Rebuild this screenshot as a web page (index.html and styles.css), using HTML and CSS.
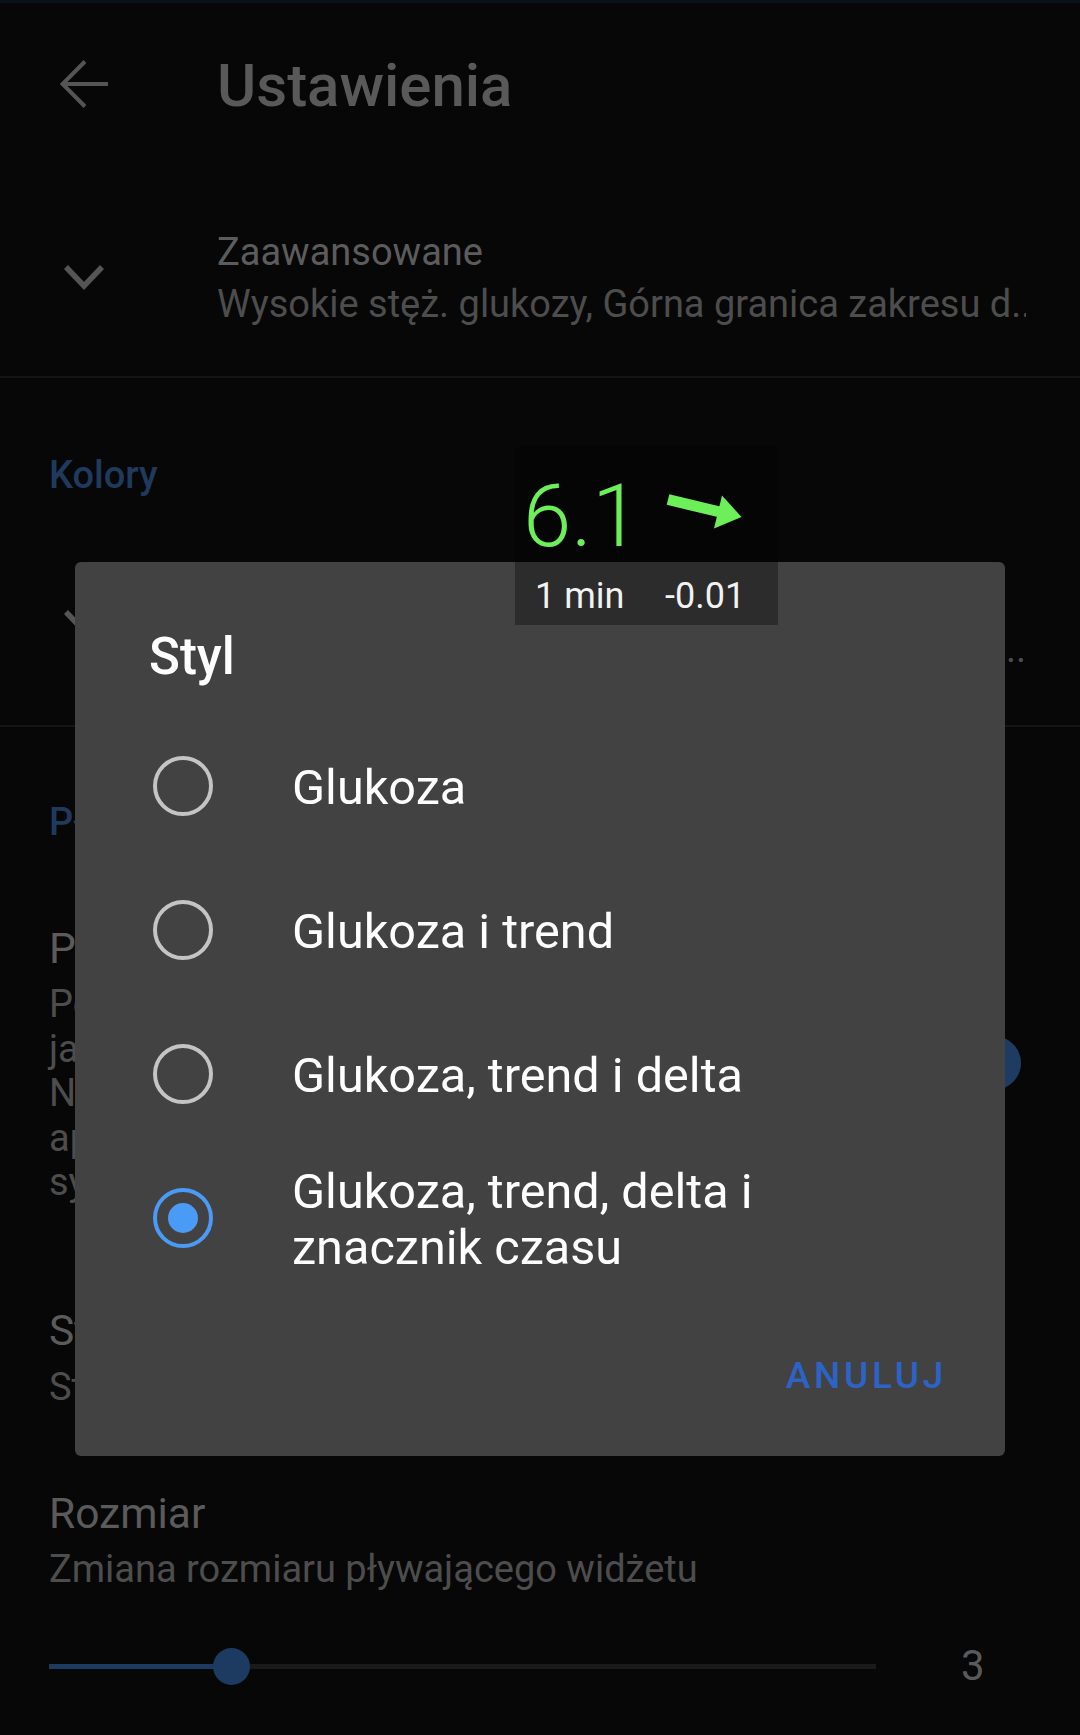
FILE: index.html
```html
<!DOCTYPE html>
<html lang="pl">
<head>
<meta charset="utf-8">
<title>Ustawienia</title>
<link rel="stylesheet" href="styles.css">
</head>
<body>
<div class="screen">
  <div class="statusbar"></div>
  <header class="toolbar">
    <div class="icon-box nav">
      <svg width="48" height="48" viewBox="0 0 48 48"><path d="M2 24H48M25 1.5L2.5 24L25 46.5" fill="none" stroke="#555555" stroke-width="4"/></svg>
    </div>
    <h1 class="title">Ustawienia</h1>
  </header>

  <div class="pref expand first">
    <div class="icon-box">
      <svg width="44" height="30" viewBox="0 0 44 30"><path d="M4 4L22 23L40 4" fill="none" stroke="#555555" stroke-width="5.5"/></svg>
    </div>
    <div class="pref-text">
      <div class="pref-title sm">Zaawansowane</div>
      <div class="pref-summary clip"><span>Wysokie stęż. glukozy, Górna granica zakresu d..</span></div>
    </div>
  </div>
  <div class="divider"></div>

  <div class="category cat-colors">Kolory</div>
  <div class="pref expand second">
    <div class="icon-box">
      <svg width="44" height="30" viewBox="0 0 44 30"><path d="M4 4L22 23L40 4" fill="none" stroke="#555555" stroke-width="5.5"/></svg>
    </div>
    <div class="pref-text">
      <div class="pref-title sm">Zaawansowane</div>
      <div class="pref-summary clip"><span>Kolor w zakresie, Kolor poniżej zakresu, Kolor tła..</span></div>
    </div>
  </div>
  <div class="divider"></div>

  <div class="category cat-widget">Pływający widżet</div>
  <div class="pref switch-pref">
    <div class="pref-text wide">
      <div class="pref-title">Pokaż pływający widżet</div>
      <div class="pref-summary multi">Pokazuje glukozę nad innymi<br>jako nakładkę na ekranie.<br>Nie zawsze działa na<br>aplikacjach z ochroną<br>systemu.</div>
    </div>
    <div class="switch"><div class="switch-thumb"></div></div>
  </div>

  <div class="pref plain style-pref">
    <div class="pref-text wide">
      <div class="pref-title">Styl</div>
      <div class="pref-summary tight">Styl pływającego widżetu</div>
    </div>
  </div>

  <div class="pref plain size-pref">
    <div class="pref-text wide">
      <div class="pref-title">Rozmiar</div>
      <div class="pref-summary tight2">Zmiana rozmiaru pływającego widżetu</div>
    </div>
  </div>

  <div class="slider-row">
    <div class="slider">
      <div class="slider-fill"></div>
      <div class="slider-thumb"></div>
      <div class="slider-rest"></div>
    </div>
    <div class="slider-value">3</div>
  </div>
</div>

<div class="dialog">
  <div class="dialog-title">Styl</div>
  <div class="radio-list">
    <div class="radio-row">
      <div class="radio"></div>
      <div class="radio-label">Glukoza</div>
    </div>
    <div class="radio-row">
      <div class="radio"></div>
      <div class="radio-label">Glukoza i trend</div>
    </div>
    <div class="radio-row">
      <div class="radio"></div>
      <div class="radio-label">Glukoza, trend i delta</div>
    </div>
    <div class="radio-row">
      <div class="radio checked"><div class="radio-dot"></div></div>
      <div class="radio-label">Glukoza, trend, delta i<br>znacznik czasu</div>
    </div>
  </div>
  <div class="dialog-actions">
    <span class="btn">ANULUJ</span>
  </div>
</div>

<div class="widget">
  <div class="widget-top">
    <div class="widget-value">6.1</div>
    <svg class="widget-arrow" width="85" height="45" viewBox="0 0 85 45">
      <path d="M5 7.5L57 20" stroke="#6cef59" stroke-width="11" fill="none"/>
      <path d="M78.5 25L51 36.5L59 3.5Z" fill="#6cef59"/>
    </svg>
  </div>
  <div class="widget-bottom">
    <span class="widget-age">1 min</span>
    <span class="widget-delta">-0.01</span>
  </div>
</div>
</body>
</html>
```

FILE: styles.css
```css
html, body {
  margin: 0;
  padding: 0;
}
body {
  width: 1080px;
  height: 1735px;
  overflow: hidden;
  background: #070707;
  font-family: Roboto, "Noto Sans", "Liberation Sans", sans-serif;
  position: relative;
}
.screen {
  width: 1080px;
  height: 1735px;
  display: flex;
  flex-direction: column;
}
.statusbar {
  height: 3px;
  background: #0b111c;
}
.toolbar {
  height: 165px;
  display: flex;
  align-items: center;
}
.icon-box {
  width: 168px;
  flex: none;
  display: flex;
  justify-content: center;
  align-items: center;
}
.icon-box.nav {
  margin-bottom: 3px;
}
.title {
  margin: 0 0 0 49px;
  font-size: 60px;
  line-height: 62px;
  font-weight: 500;
  color: #595959;
}
.pref {
  display: flex;
  align-items: center;
}
.pref-text {
  margin-left: 49px;
}
.pref.expand.first {
  padding: 58px 0 46px;
}
.pref.expand.second {
  padding: 70px 0 50px;
}
.pref-title {
  font-size: 42.5px;
  line-height: 54px;
  color: #5b5b5b;
  white-space: nowrap;
}
.pref-title.sm {
  font-size: 38px;
  line-height: 52px;
  color: #5c5c5c;
}
.pref-summary {
  font-size: 38px;
  line-height: 52px;
  color: #4d4d4d;
  white-space: nowrap;
}
.pref-summary.clip {
  width: 809px;
  display: flex;
  justify-content: flex-end;
  overflow: hidden;
}
.pref-summary.clip span {
  flex: none;
}
.pref.expand.first .pref-summary.clip {
  justify-content: flex-start;
}
.divider {
  height: 2px;
  background: #151515;
}
.category {
  margin-left: 49px;
  font-size: 38px;
  line-height: 52px;
  font-weight: 500;
  color: #1f3a5d;
}
.cat-colors {
  margin-top: 71px;
}
.cat-widget {
  margin-top: 69px;
}
.switch-pref {
  padding-top: 74px;
  justify-content: space-between;
}
.pref-summary.multi {
  margin-top: 6px;
  line-height: 44.5px;
}
.switch {
  width: 90px;
  height: 36px;
  border-radius: 18px;
  background: #16283f;
  margin-right: 59px;
  display: flex;
  justify-content: flex-end;
  align-items: center;
}
.switch-thumb {
  width: 54px;
  height: 54px;
  border-radius: 50%;
  background: #1e3c62;
  flex: none;
}
.style-pref {
  padding-top: 99.5px;
}
.pref-summary.tight {
  margin-top: 3px;
}
.size-pref {
  padding-top: 74px;
}
.pref-summary.tight2 {
  margin-top: 2px;
}
.slider-row {
  margin-top: 51px;
  height: 40px;
  display: flex;
  align-items: center;
  padding-left: 49px;
}
.slider {
  width: 827px;
  height: 38px;
  display: flex;
  align-items: center;
}
.slider-fill {
  width: 182px;
  height: 5px;
  background: #1d3b60;
  flex: none;
}
.slider-thumb {
  width: 37px;
  height: 37px;
  border-radius: 50%;
  background: #1d3b60;
  margin-left: -18.5px;
  flex: none;
  position: relative;
  z-index: 1;
}
.slider-rest {
  flex: 1;
  height: 5px;
  background: #1a1a1a;
  margin-left: -18.5px;
}
.slider-value {
  margin-left: 85px;
  font-size: 42px;
  line-height: 40px;
  color: #5a5a5a;
}

/* Dialog */
.dialog {
  position: absolute;
  left: 75px;
  top: 562px;
  width: 930px;
  height: 894px;
  box-sizing: border-box;
  background: #424242;
  border-radius: 6px;
  padding-top: 65px;
  z-index: 5;
  display: flex;
  flex-direction: column;
}
.dialog-title {
  margin-left: 74px;
  font-size: 51px;
  line-height: 60px;
  font-weight: 500;
  color: #ffffff;
}
.radio-list {
  margin-top: 27px;
  display: flex;
  flex-direction: column;
}
.radio-row {
  height: 144px;
  display: flex;
  align-items: center;
  padding-left: 78px;
}
.radio {
  width: 60px;
  height: 60px;
  box-sizing: border-box;
  border: 4.5px solid #c4c4c4;
  border-radius: 50%;
  flex: none;
  display: flex;
  align-items: center;
  justify-content: center;
}
.radio.checked {
  border-color: #4a9bf5;
}
.radio-dot {
  width: 30px;
  height: 30px;
  border-radius: 50%;
  background: #4a9bf5;
}
.radio-label {
  margin-left: 79px;
  margin-top: 3px;
  font-size: 48.6px;
  line-height: 56px;
  color: #ffffff;
}
.dialog-actions {
  margin-top: 60px;
  display: flex;
  justify-content: flex-end;
  padding-right: 58px;
}
.btn {
  font-size: 37px;
  line-height: 52px;
  font-weight: 500;
  letter-spacing: 3.7px;
  color: #2d62c6;
}

/* Floating widget */
.widget {
  position: absolute;
  left: 515px;
  top: 447px;
  width: 263px;
  height: 178px;
  z-index: 10;
  display: flex;
  flex-direction: column;
}
.widget-top {
  height: 115px;
  background: #050505;
  display: flex;
  align-items: flex-start;
}
.widget-value {
  width: 140px;
  margin-left: 8px;
  margin-top: 25.6px;
  font-size: 87px;
  line-height: 86px;
  font-weight: 300;
  color: #6cef59;
  white-space: nowrap;
}
.widget-arrow {
  margin-top: 45px;
  flex: none;
}
.widget-bottom {
  height: 63px;
  box-sizing: border-box;
  padding-top: 4px;
  background: #2c2c2c;
  display: flex;
  align-items: flex-start;
  padding-left: 20px;
}
.widget-age, .widget-delta {
  font-size: 36px;
  line-height: 60px;
  color: #f2f2f2;
  white-space: nowrap;
}
.widget-age {
  width: 130px;
}
```
